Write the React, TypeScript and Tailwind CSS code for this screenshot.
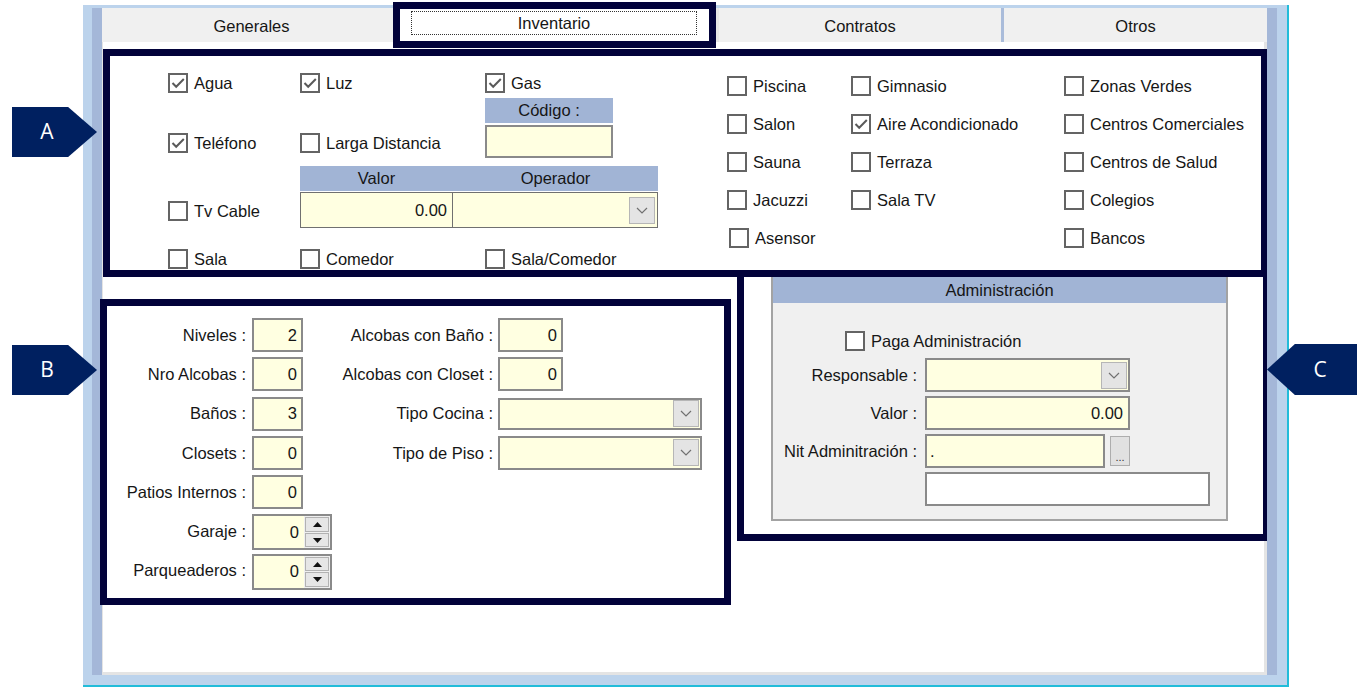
import React from 'react';

function CheckMark() {
  return (
    <svg width="14" height="12" viewBox="0 0 14 12">
      <path d="M1.5 6 L5.2 9.8 L12.8 2" fill="none" stroke="#5a5a5a" strokeWidth="2" />
    </svg>
  );
}

function Check({ label, checked = false, extra = '' }: { label: string; checked?: boolean; extra?: string }) {
  return (
    <div className={'flex items-center h-[24px] gap-[6px] whitespace-nowrap ' + extra}>
      <span className="w-[20px] h-[20px] border-2 border-[#646464] bg-white flex items-center justify-center shrink-0">
        {checked ? <CheckMark /> : null}
      </span>
      <span>{label}</span>
    </div>
  );
}

function Chevron() {
  return (
    <svg width="12" height="7" viewBox="0 0 12 7">
      <path d="M1 1 L6 6 L11 1" fill="none" stroke="#707070" strokeWidth="1.2" />
    </svg>
  );
}

function DropBtn() {
  return (
    <div className="w-[26px] h-[27px] bg-[#e4e4e4] border border-[#b6b6b6] flex items-center justify-center shrink-0">
      <Chevron />
    </div>
  );
}

function Select({ w }: { w: string }) {
  return (
    <div className={'h-full border-2 border-[#8a8a8a] bg-[#ffffe1] flex items-center justify-end pr-[1px] ' + w}>
      <DropBtn />
    </div>
  );
}

function NumBox({ value, w }: { value: string; w: string }) {
  return (
    <div className={'h-full border-2 border-[#8a8a8a] bg-[#ffffe1] flex items-center justify-end pr-[4px] ' + w}>
      {value}
    </div>
  );
}

function Tri({ up }: { up: boolean }) {
  return (
    <svg width="9" height="5" viewBox="0 0 9 5">
      <path d={up ? 'M0 5 L4.5 0 L9 5 Z' : 'M0 0 L4.5 5 L9 0 Z'} fill="#111" />
    </svg>
  );
}

function Spinner({ value }: { value: string }) {
  return (
    <div className="w-[80px] h-[36px] border-2 border-[#8a8a8a] flex">
      <div className="flex-1 bg-[#ffffe1] flex items-center justify-end pr-[5px]">{value}</div>
      <div className="w-[26px] bg-[#efefef] flex flex-col p-[1px] gap-[1px]">
        <div className="flex-1 bg-[#e6e6e6] border border-[#b2b2b2] flex items-center justify-center">
          <Tri up />
        </div>
        <div className="flex-1 bg-[#e6e6e6] border border-[#b2b2b2] flex items-center justify-center">
          <Tri up={false} />
        </div>
      </div>
    </div>
  );
}

function Label({ text, pr }: { text: string; pr: string }) {
  return <div className={'h-full flex items-center justify-end whitespace-nowrap ' + pr}>{text}</div>;
}

export default function App() {
  return (
    <div className="relative w-[1357px] h-[699px] bg-white overflow-hidden font-['Liberation_Sans',Arial,sans-serif] text-[16.5px] text-[#161616]">
      {/* window */}
      <div className="ml-[83px] mt-[5px] w-[1206px] h-[682px] bg-[#bcd3ec] border-r-2 border-b-2 border-[#22bcd9] pl-[9px] pr-[10px] pt-[3px] pb-[10px] flex">
        <div className="w-[10px] shrink-0 bg-[#a4b7d8]" />
        <div className="w-[1165px] shrink-0 flex flex-col">
          {/* tabs */}
          <div className="h-[34px] flex">
            <div className="w-[291px] shrink-0 bg-[#f0f0f0] flex items-center justify-center pt-[2px] pl-[8px]">Generales</div>
            <div className="relative w-[323px] shrink-0 bg-white pt-[3px] pb-[7px] pl-[18px] pr-[19px]">
              <div className="h-full border border-dotted border-[#333] flex items-center justify-center">Inventario</div>
              <div className="absolute left-0 right-0 -top-[6px] -bottom-[6px] border-[7px] border-[#02023a] z-10" />
            </div>
            <div className="w-[285px] shrink-0 bg-[#f0f0f0] border-l-[3px] border-[#e6e6e6] flex items-center justify-center pt-[2px]">Contratos</div>
            <div className="flex-1 bg-[#f0f0f0] border-l-[3px] border-[#aabcda] flex items-center justify-center pt-[2px]">Otros</div>
          </div>
          {/* page */}
          <div className="flex-1 bg-white border-l border-r-[3px] border-b-[3px] border-[#e4e4e4]">
            {/* Box A */}
            <div className="mt-[7px] w-[1165px] h-[228px] border-[7px] border-[#02023a] flex">
              <div className="w-[617px] shrink-0 pl-[58px] flex flex-col">
                <div className="mt-[15px] flex">
                  <div className="w-[132px] shrink-0"><Check label="Agua" checked /></div>
                  <div className="w-[185px] shrink-0"><Check label="Luz" checked /></div>
                  <div><Check label="Gas" checked /></div>
                </div>
                <div className="mt-[3px] flex items-end">
                  <div className="w-[132px] shrink-0 mb-[3px]"><Check label="Teléfono" checked /></div>
                  <div className="w-[185px] shrink-0 mb-[3px]"><Check label="Larga Distancia" /></div>
                  <div className="w-[128px] shrink-0 flex flex-col">
                    <div className="h-[25px] bg-[#a1b4d5] text-center leading-[25px]">Código :</div>
                    <div className="mt-[2px] h-[33px] border-2 border-[#8a8a8a] bg-[#ffffe1]" />
                  </div>
                </div>
                <div className="mt-[8px] flex items-end">
                  <div className="w-[132px] shrink-0 mb-[5px]"><Check label="Tv Cable" /></div>
                  <div className="w-[358px] shrink-0 flex flex-col">
                    <div className="h-[25px] bg-[#a1b4d5] flex">
                      <div className="w-[153px] text-center leading-[25px]">Valor</div>
                      <div className="flex-1 text-center leading-[25px]">Operador</div>
                    </div>
                    <div className="mt-[1px] h-[36px] flex border-[1.5px] border-[#707070] bg-[#ffffe1]">
                      <div className="w-[152px] border-r-[1.5px] border-[#707070] flex items-center justify-end pr-[5px]">0.00</div>
                      <div className="flex-1 flex items-center justify-end pr-[2px]"><DropBtn /></div>
                    </div>
                  </div>
                </div>
                <div className="mt-[20px] h-[22px] flex items-center">
                  <div className="w-[132px] shrink-0"><Check label="Sala" /></div>
                  <div className="w-[185px] shrink-0"><Check label="Comedor" /></div>
                  <div><Check label="Sala/Comedor" /></div>
                </div>
              </div>
              <div className="flex-1 pt-[18px] grid grid-cols-[124px_213px_1fr] gap-y-[14px] content-start">
                <Check label="Piscina" />
                <Check label="Gimnasio" />
                <Check label="Zonas Verdes" />
                <Check label="Salon" />
                <Check label="Aire Acondicionado" checked />
                <Check label="Centros Comerciales" />
                <Check label="Sauna" />
                <Check label="Terraza" />
                <Check label="Centros de Salud" />
                <Check label="Jacuzzi" />
                <Check label="Sala TV" />
                <Check label="Colegios" />
                <Check label="Asensor" extra="ml-[2px]" />
                <div />
                <Check label="Bancos" />
              </div>
            </div>
            {/* Row B / C */}
            <div className="flex items-start">
              <div className="shrink-0 -ml-[3px] mt-[22px] w-[631px] h-[306px] border-[7px] border-[#02023a] pt-[12px]">
                <div className="grid grid-cols-[145px_80px_166px_204px] grid-rows-[repeat(7,34px)] gap-y-[5.3px]">
                  <Label text="Niveles :" pr="pr-[6px]" />
                  <div><NumBox value="2" w="w-[51px]" /></div>
                  <Label text="Alcobas con Baño :" pr="pr-[5px]" />
                  <div><NumBox value="0" w="w-[65px]" /></div>

                  <Label text="Nro Alcobas :" pr="pr-[6px]" />
                  <div><NumBox value="0" w="w-[51px]" /></div>
                  <Label text="Alcobas con Closet :" pr="pr-[5px]" />
                  <div><NumBox value="0" w="w-[65px]" /></div>

                  <Label text="Baños :" pr="pr-[6px]" />
                  <div><NumBox value="3" w="w-[51px]" /></div>
                  <Label text="Tipo Cocina :" pr="pr-[5px]" />
                  <div className="py-[1px]"><Select w="w-[204px]" /></div>

                  <Label text="Closets :" pr="pr-[6px]" />
                  <div><NumBox value="0" w="w-[51px]" /></div>
                  <Label text="Tipo de Piso :" pr="pr-[5px]" />
                  <div><Select w="w-[204px]" /></div>

                  <Label text="Patios Internos :" pr="pr-[6px]" />
                  <div><NumBox value="0" w="w-[51px]" /></div>
                  <div />
                  <div />

                  <Label text="Garaje :" pr="pr-[6px]" />
                  <div><Spinner value="0" /></div>
                  <div />
                  <div />

                  <Label text="Parqueaderos :" pr="pr-[6px]" />
                  <div><Spinner value="0" /></div>
                  <div />
                  <div />
                </div>
              </div>
              <div className="shrink-0 ml-[6px] w-[533px] h-[264px] border-[7px] border-t-0 border-[#02023a]">
                <div className="ml-[27px] w-[457px] border-2 border-t-0 border-[#a3a3a3] bg-[#f0f0f0]">
                  <div className="h-[26px] bg-[#a1b4d5] text-center leading-[26px]">Administración</div>
                  <div className="h-[216px] pt-[26px]">
                    <div className="pl-[72px]"><Check label="Paga Administración" /></div>
                    <div className="mt-[5px] grid grid-cols-[152px_1fr] grid-rows-[repeat(4,34px)] gap-y-[4px]">
                      <Label text="Responsable :" pr="pr-[8px]" />
                      <div><Select w="w-[205px]" /></div>
                      <Label text="Valor :" pr="pr-[8px]" />
                      <div className="h-full w-[205px] border-2 border-[#8a8a8a] bg-[#ffffe1] flex items-center justify-end pr-[5px]">0.00</div>
                      <Label text="Nit Adminitración :" pr="pr-[8px]" />
                      <div className="flex items-center gap-[5px]">
                        <div className="h-[34px] w-[180px] border-2 border-[#8a8a8a] bg-[#ffffe1] flex items-center pl-[3px]">.</div>
                        <div className="w-[20px] h-[30px] bg-[#e1e1e1] border border-[#adadad] flex items-end justify-center text-[11px] leading-[14px] pb-[1px] text-[#333]">...</div>
                      </div>
                      <div />
                      <div className="h-full w-[285px] border-2 border-[#8a8a8a] bg-white" />
                    </div>
                  </div>
                </div>
              </div>
            </div>
          </div>
        </div>
        <div className="w-[10px] shrink-0 bg-[#a4b7d8]" />
      </div>

      {/* annotation arrows */}
      <div className="absolute left-[12px] top-[107px] w-[85px] h-[50px] bg-[#002060] [clip-path:polygon(0_0,66%_0,100%_50%,66%_100%,0_100%)] flex items-center justify-center pr-[15px] text-white text-[21px] font-['Open_Sans',sans-serif]">A</div>
      <div className="absolute left-[12px] top-[345px] w-[85px] h-[50px] bg-[#002060] [clip-path:polygon(0_0,66%_0,100%_50%,66%_100%,0_100%)] flex items-center justify-center pr-[15px] text-white text-[21px] font-['Open_Sans',sans-serif]">B</div>
      <div className="absolute left-[1267px] top-[344px] w-[90px] h-[51px] bg-[#002060] [clip-path:polygon(0_50%,31%_0,100%_0,100%_100%,31%_100%)] flex items-center justify-center pl-[16px] text-white text-[21px] font-['Open_Sans',sans-serif]">C</div>
    </div>
  );
}
